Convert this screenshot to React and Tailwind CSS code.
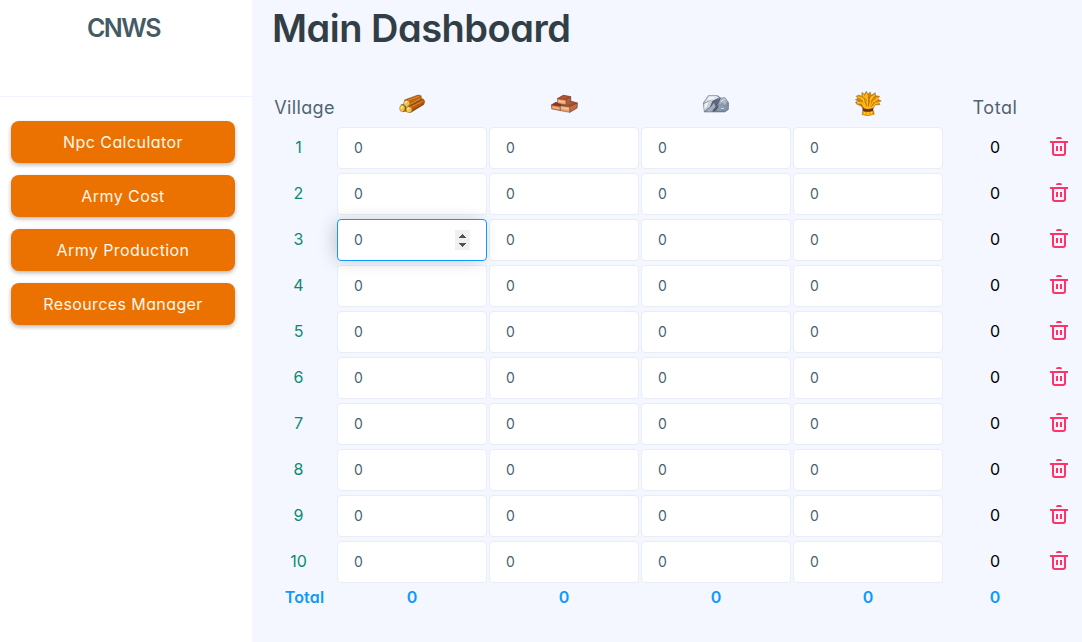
import React, { useState } from "react";

const navItems = [
  { label: "Npc Calculator", spacing: "tracking-[0.44px]" },
  { label: "Army Cost", spacing: "tracking-[0.45px]" },
  { label: "Army Production", spacing: "tracking-[0.42px]" },
  { label: "Resources Manager", spacing: "tracking-[0.4px]" },
];

const gridColumns = "grid grid-cols-[61px_150px_150px_150px_150px_100px_24px] gap-x-0.5";

function Wood() {
  return (
    <svg width="30" height="26" viewBox="21 21 90 78" aria-label="Wood">
      <g stroke="#6b4426" strokeWidth="1.5" strokeLinejoin="round">
        <path d="M43 48 L84 33 L93 35 L95 45 L54 66 Z" fill="#c0640f" />
        <path d="M34 62 L45 60 L52 81 L39 83 Z" fill="#98500f" />
        <path d="M53 68 L99 44 L104 51 L102 61 L61 86 Z" fill="#b5590e" />
      </g>
      <path d="M52 50 L87 37 M60 61 L91 44 M62 70 L98 51" stroke="#e68b20" strokeWidth="3" />
      <path d="M59 66 L96 47 M65 82 L101 60" stroke="#7d3f14" strokeWidth="2.5" />
      <g fill="#f7cb45" stroke="#8a611e" strokeWidth="1.5">
        <ellipse cx="50" cy="58" rx="9" ry="9" />
        <ellipse cx="37" cy="73" rx="8" ry="10" />
        <ellipse cx="57" cy="77" rx="9" ry="9" />
      </g>
      <path d="M45 57 L51 52 M33 73 L37 67 M52 76 L57 71" stroke="#ffec91" strokeWidth="4" />
      <path d="M50 61 L54 57 M38 78 L41 73 M58 80 L61 76" stroke="#d99b22" strokeWidth="2" />
    </svg>
  );
}

function Clay() {
  return (
    <svg width="30" height="26" viewBox="27 21 90 78" aria-label="Clay">
      <g stroke="#5f443c" strokeWidth="1.5" strokeLinejoin="round">
        <path d="M34 63 L48 55 L64 61 L62 80 L35 75 Z" fill="#dc8b57" />
        <path d="M34 63 L48 55 L64 61 L60 67 Z" fill="#93301b" />
        <path d="M61 65 L90 51 L112 57 L111 72 L89 85 L61 80 Z" fill="#eba06a" />
        <path d="M61 65 L90 51 L112 57 L89 68 Z" fill="#b3482a" />
        <path d="M89 68 L112 57 L111 72 L89 85 Z" fill="#c06c41" />
        <path d="M52 44 L70 34 L92 38 L92 52 L78 63 L53 58 Z" fill="#eba06a" />
        <path d="M52 44 L70 34 L92 38 L78 48 Z" fill="#b3482a" />
        <path d="M78 48 L92 38 L92 52 L78 63 Z" fill="#b45f3a" />
      </g>
      <path d="M55 49 L75 53 V57 L55 53 Z M64 69 L86 73 V77 L64 73 Z M38 68 L58 72 V75 L38 71 Z" fill="#fcc998" />
      <path d="M65 41 L79 38 M80 61 L96 55" stroke="#cf6842" strokeWidth="2" />
    </svg>
  );
}

function Iron() {
  return (
    <svg width="30" height="26" viewBox="33 21 90 78" aria-label="Iron">
      <path d="M40 57 L55 35 L83 35 L92 42 L105 41 L116 57 L115 77 L104 84 L43 84 Z" fill="#78859a" stroke="#596273" strokeWidth="1.5" />
      <path d="M41 57 L56 36 L81 36 L87 42 L68 50 L56 50 Z" fill="#dce0e5" />
      <path d="M41 60 L57 51 L67 52 L61 67 L43 81 Z" fill="#cbd0d7" />
      <path d="M68 51 L86 42 L78 61 L83 73 L73 82 L60 69 Z" fill="#566378" />
      <path d="M62 70 L72 56 L77 68 L63 83 L47 82 Z" fill="#a6aebb" />
      <path d="M91 43 L105 42 L112 54 L103 66 L98 56 L87 62 Z" fill="#a9b7c7" />
      <path d="M85 64 L96 57 L101 67 L92 81 L79 79 Z" fill="#8e9cae" />
      <path d="M103 65 L113 56 L113 76 L102 82 L94 77 Z" fill="#7e94a9" />
      <path d="M57 40 L78 38 L66 46 L53 47 Z M44 60 L55 54 L50 68 L44 74 Z" fill="#f3f4f5" />
      <path d="M91 43 L80 61 L84 70 L70 83" fill="none" stroke="#3c465b" strokeWidth="2.5" />
      <path d="M93 52 L105 45 M93 74 L103 72" stroke="#d7e0e8" strokeWidth="3" />
    </svg>
  );
}

function Crop() {
  return (
    <svg width="30" height="26" viewBox="24 21 90 78" aria-label="Crop">
      <path d="M54 76 L50 67 L34 60 L32 54 L40 51 L31 47 L39 43 L33 37 L42 33 L50 37 L51 25 L58 31 L64 22 L69 30 L76 24 L78 34 L91 26 L92 35 L104 37 L98 45 L109 51 L101 54 L105 62 L90 63 L84 75 L88 91 L69 95 L51 92 Z" fill="#d78105" stroke="#94713b" strokeWidth="1.5" />
      <path d="M61 74 L51 57 L36 56 M62 73 L54 46 L38 38 M65 74 L61 48 L54 31 M69 74 L67 48 L65 27 M73 75 L76 49 L88 32 M76 74 L84 54 L99 41 M78 74 L91 58 L102 56" fill="none" stroke="#ffb914" strokeWidth="4.5" strokeLinejoin="round" />
      <path d="M56 73 L44 56 M65 67 L58 42 M70 67 L74 40 M78 69 L94 48" fill="none" stroke="#9d5606" strokeWidth="2" />
      <path d="M58 49 L47 38 M64 43 L61 32 M74 47 L82 36 M87 54 L98 45 M47 58 L37 54" stroke="#ffe052" strokeWidth="2.5" />
      <path d="M55 81 L52 91 L68 95 L86 91 L81 80 Z" fill="#f4a309" />
      <path d="M59 84 L58 90 M69 83 L69 92 M77 83 L80 89" stroke="#ffd440" strokeWidth="4" />
      <path d="M53 72 Q68 79 84 72 L84 80 Q67 87 53 80 Z" fill="#6d3517" />
    </svg>
  );
}

function TrashIcon() {
  return (
    <svg width="20" height="20" viewBox="0 0 20 20" fill="none" aria-hidden="true">
      <path d="M7 3q0-2 2-2h2q2 0 2 2z" fill="#ff3366" />
      <path d="M1 6h18M4 6v11q0 2 2 2h8q2 0 2-2V6M8 10v5M12 10v5" stroke="#ff3366" strokeWidth="2" />
    </svg>
  );
}

function StepperArrows() {
  return (
    <span className="flex h-5 w-[15px] items-center justify-center bg-[#f0f0f0]">
      <svg width="15" height="20" viewBox="0 0 15 20" fill="#505050" aria-hidden="true">
        <path d="M4 8h7V7h-1V6H9V5H8V4H7v1H6v1H5v1H4zM4 13h7v1h-1v1H9v1H8v1H7v-1H6v-1H5v-1H4z" />
      </svg>
    </span>
  );
}

function ResourceField({ active, onSelect }) {
  return (
    <button
      type="button"
      onClick={onSelect}
      className={
        "flex h-[42px] items-center justify-between rounded border bg-white pl-4 pr-4 text-left text-[14px] text-[#4b626d] outline-none " +
        (active
          ? "relative border-[#0d99ff] shadow-[-4px_1px_18px_-2px_rgba(0,0,0,0.2)]"
          : "border-[#e9edf5]")
      }
    >
      <span className="pb-0.5">0</span>
      {active && <StepperArrows />}
    </button>
  );
}

export default function App() {
  const [selected, setSelected] = useState("3-0");
  const rows = [1, 2, 3, 4, 5, 6, 7, 8, 9, 10];
  return (
    <div className="flex h-[642px] w-[1082px] overflow-hidden bg-[#f4f7ff] font-['Inter','Open_Sans',sans-serif] [font-feature-settings:'cv11','ss03']">
      <aside className="w-[252px] shrink-0 bg-white">
        <div className="flex h-[97px] justify-center border-b border-[#f0f3fd] pr-[5px] pt-[10px]">
          <span className="text-[25px] font-semibold leading-9 tracking-[-1.5px] text-[#455a64]">CNWS</span>
        </div>
        <nav className="flex flex-col gap-3 pl-[11px] pr-[17px] pt-6">
          {navItems.map((item) => (
            <button
              key={item.label}
              type="button"
              className={"h-[42px] rounded-lg bg-[#eb7100] text-[16px] text-[#fff8ed] shadow-[0_2px_4px_rgba(0,0,0,0.28)] " + item.spacing}
            >
              {item.label}
            </button>
          ))}
        </nav>
      </aside>
      <main className="flex-1 pl-[22px]">
        <h1 className="-ml-0.5 h-[91px] pt-[3px] text-[38px] font-semibold leading-[50px] tracking-[-0.5px] text-[#323e45]">
          Main Dashboard
        </h1>
        <div className={gridColumns + " h-9 text-[18px] text-[#506570]"}>
          <span className="pt-[3px] text-center tracking-[0.35px]">Village</span>
          <span className="flex justify-center"><Wood /></span>
          <span className="flex justify-center"><Clay /></span>
          <span className="flex justify-center"><Iron /></span>
          <span className="flex justify-center"><Crop /></span>
          <span className="pt-[3px] text-center tracking-[0.6px]">Total</span>
        </div>
        <div className="flex flex-col gap-1">
          {rows.map((row) => (
            <div key={row} className={gridColumns + " items-center"}>
              <span className="pb-0.5 pr-3 text-center text-[16px] text-[#078b72]">{row}</span>
              {[0, 1, 2, 3].map((col) => (
                <ResourceField
                  key={col}
                  active={selected === row + "-" + col}
                  onSelect={() => setSelected(row + "-" + col)}
                />
              ))}
              <span className="pb-0.5 text-center text-[16px] text-black">0</span>
              <span className="flex justify-center pb-1"><TrashIcon /></span>
            </div>
          ))}
        </div>
        <div className={gridColumns + " pt-0.5 text-center text-[16px] font-semibold text-[#0d99ff]"}>
          <span className="tracking-[0.2px]">Total</span>
          <span>0</span>
          <span>0</span>
          <span>0</span>
          <span>0</span>
          <span>0</span>
        </div>
      </main>
    </div>
  );
}
